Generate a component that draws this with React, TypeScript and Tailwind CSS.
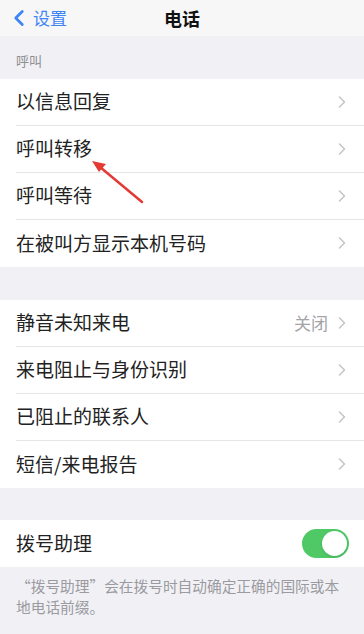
import { ChevronLeft, ChevronRight } from 'lucide-react'

const font = { fontFamily: '"Noto Sans CJK SC", "Noto Sans", sans-serif' }

type RowProps = { label: string; value?: string; last?: boolean }

const Row = ({ label, value, last }: RowProps) => (
    <div className="flex h-[47px] items-center bg-white pl-4">
        <div className={`flex h-full flex-1 items-center pr-3 ${last ? '' : 'border-b border-[#e6e6ea]'}`}>
            <span className="flex-1 text-[19px] text-[#222]">{label}</span>
            {value && <span className="mr-1 text-[17px] text-[#a3a3a8]">{value}</span>}
            <ChevronRight className="h-5 w-5 text-[#c4c4c8]" strokeWidth={1.8} />
        </div>
    </div>
)

const App = () => {
    return (
        <div className="relative h-[634px] w-[364px] overflow-hidden bg-[#f1f1f5]" style={font}>
            {/* nav */}
            <div className="relative flex h-[36px] items-center bg-[#f7f7f8]">
                <div className="flex items-center pl-[6px] text-[#3f86f5]">
                    <ChevronLeft className="h-[26px] w-[26px]" strokeWidth={2.6} />
                    <span className="ml-[1px] text-[17px]">设置</span>
                </div>
                <div className="absolute left-0 right-0 text-center text-[18px] font-semibold text-[#111]">电话</div>
            </div>

            {/* 呼叫 */}
            <div className="px-4 pb-[8px] pt-[15px] text-[13px] text-[#8e8e93]">呼叫</div>
            <Row label="以信息回复" />
            <Row label="呼叫转移" />
            <Row label="呼叫等待" />
            <Row label="在被叫方显示本机号码" last />

            <div className="h-[33px]" />
            <Row label="静音未知来电" value="关闭" />
            <Row label="来电阻止与身份识别" />
            <Row label="已阻止的联系人" />
            <Row label="短信/来电报告" last />

            <div className="h-[32px]" />
            <div className="flex h-[47px] items-center bg-white pl-4 pr-[15px]">
                <span className="flex-1 text-[19px] text-[#222]">拨号助理</span>
                <div className="flex h-[29px] w-[47px] items-center justify-end rounded-full bg-[#4fc866] p-[2px]">
                    <div className="h-[25px] w-[25px] rounded-full bg-white shadow" />
                </div>
            </div>
            <div className="pl-4 pr-[20px] pt-[8px] text-[14.7px] leading-[21px] text-[#9a9aa0]">
                “拨号助理”会在拨号时自动确定正确的国际或本地电话前缀。
            </div>

            {/* 箭头 */}
            <svg className="absolute left-0 top-0" width="364" height="634" viewBox="0 0 364 634">
                <line x1="142" y1="202" x2="100" y2="167" stroke="#e53935" strokeWidth="2.5" strokeLinecap="round" />
                <polygon points="92,161 106,164 99,172" fill="#e53935" />
            </svg>
        </div>
    )
}

export default App
